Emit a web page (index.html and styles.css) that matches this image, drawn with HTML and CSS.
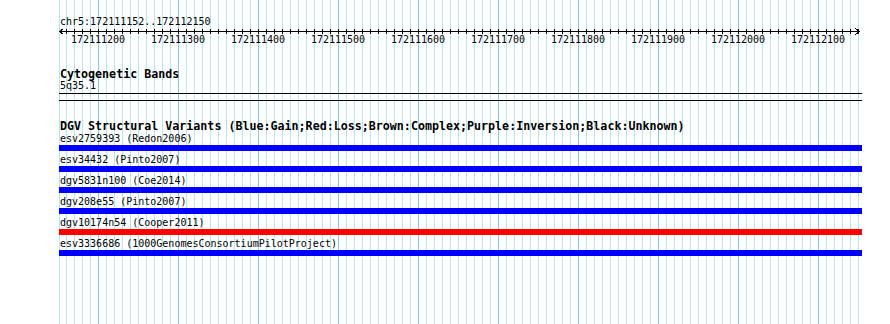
FILE: index.html
```html
<!DOCTYPE HTML>
<html lang="en">
<head>
    <title>chr5:172111152..172112150</title>
    <link rel="stylesheet" href="styles.css">
</head>
<body>
    <div class="panel">
        <div class="ruler-title">chr5:172111152..172112150</div>
        <svg class="axis" width="803" height="9" shape-rendering="crispEdges">
            <defs>
                <pattern id="ticks" x="7" y="0" width="8" height="9" patternUnits="userSpaceOnUse">
                    <rect x="0" y="2" width="1" height="5" fill="#000"/>
                </pattern>
            </defs>
            <rect x="0" y="4" width="801" height="1" fill="#000"/>
            <rect x="7" y="0" width="793" height="9" fill="url(#ticks)"/>
            <path d="M0.5 4.5 L4.5 1.5 M0.5 4.5 L4.5 7.5 M800.5 4.5 L796.5 1.5 M800.5 4.5 L796.5 7.5" stroke="#000" fill="none"/>
        </svg>
        <div class="tick-labels">
            <span>172111200</span>
            <span>172111300</span>
            <span>172111400</span>
            <span>172111500</span>
            <span>172111600</span>
            <span>172111700</span>
            <span>172111800</span>
            <span>172111900</span>
            <span>172112000</span>
            <span>172112100</span>
        </div>

        <div class="track-title bands-title">Cytogenetic Bands</div>
        <div class="label">5q35.1</div>
        <div class="rule"></div>

        <div class="track-title dgv-title">DGV Structural Variants (Blue:Gain;Red:Loss;Brown:Complex;Purple:Inversion;Black:Unknown)</div>
        <div class="feature">
            <div class="label">esv2759393 (Redon2006)</div>
            <div class="bar gain"></div>
        </div>
        <div class="feature">
            <div class="label">esv34432 (Pinto2007)</div>
            <div class="bar gain"></div>
        </div>
        <div class="feature">
            <div class="label">dgv5831n100 (Coe2014)</div>
            <div class="bar gain"></div>
        </div>
        <div class="feature">
            <div class="label">dgv208e55 (Pinto2007)</div>
            <div class="bar gain"></div>
        </div>
        <div class="feature">
            <div class="label">dgv10174n54 (Cooper2011)</div>
            <div class="bar loss"></div>
        </div>
        <div class="feature">
            <div class="label">esv3336686 (1000GenomesConsortiumPilotProject)</div>
            <div class="bar gain"></div>
        </div>
    </div>
</body>
</html>
```

FILE: styles.css
```css
body {
    margin: 0;
    background-color: #ffffff;
    color: #000000;
    font-family: "DejaVu Sans Mono", "Liberation Mono", monospace;
    font-size: 10px;
    line-height: 13px;
}
.panel {
    margin-left: 59px;
    width: 803px;
    min-height: 324px;
    padding-top: 15px;
    box-sizing: border-box;
    background-image:
        linear-gradient(to right, #b0e8ec 0 1px, transparent 1px),
        repeating-linear-gradient(to right, transparent 0 39px, #8cc6e6 39px 40px, transparent 40px 80px),
        repeating-linear-gradient(to right, transparent 0 7px, #b0e8ec 7px 8px);
    background-size: 801px 100%;
    background-repeat: no-repeat;
}
.ruler-title {
    padding-left: 1px;
    height: 12px;
}
.axis {
    display: block;
}
.tick-labels {
    display: flex;
    margin-left: -1px;
    margin-top: -3px;
}
.tick-labels span {
    width: 80px;
    text-align: center;
}
.track-title {
    font-weight: bold;
    font-size: 11.67px;
    line-height: 13px;
    padding-left: 1px;
    white-space: nowrap;
}
.bands-title {
    margin-top: 22px;
}
.label {
    padding-left: 1px;
    white-space: nowrap;
}
.bands-title + .label {
    margin-top: -2px;
}
.rule {
    height: 6px;
    border-top: 1px solid #000;
    border-bottom: 1px solid #000;
    margin-top: 1px;
}
.dgv-title {
    margin-top: 19px;
    margin-bottom: -1px;
}
.feature {
    margin-bottom: 2px;
}
.bar {
    height: 6px;
}
.gain {
    background-color: #0000ff;
}
.loss {
    background-color: #ff0000;
}
```
